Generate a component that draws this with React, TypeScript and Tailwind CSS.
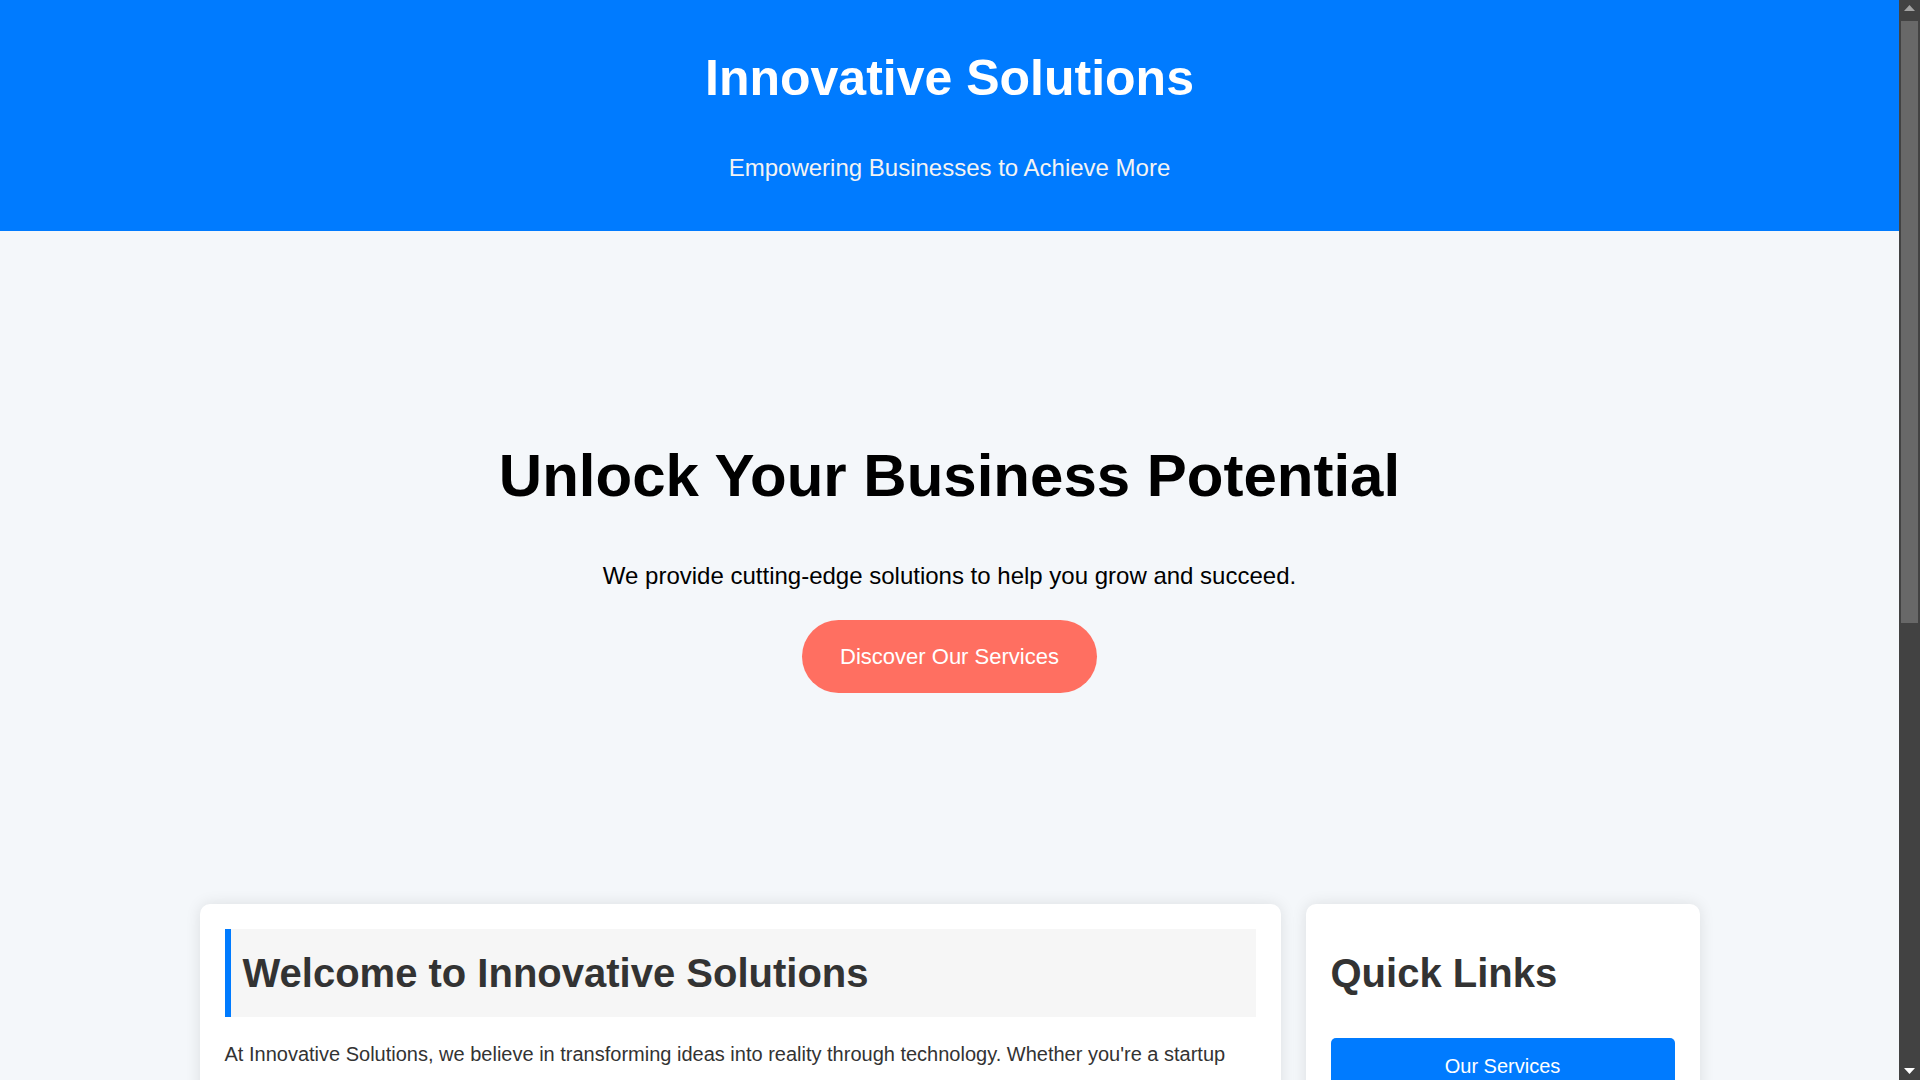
import React from "react";

function FakeScrollbar() {
  return (
    <div className="sticky top-0 flex h-[1080px] w-[21px] shrink-0 flex-col items-center bg-[#424242]">
      <svg width="11" height="6" viewBox="0 0 11 6" className="mt-[5px]">
        <polygon points="5.5,0 11,6 0,6" fill="#a3a3a3" />
      </svg>
      <div className="mt-[10px] h-[602px] w-[17px] bg-[#686868]" />
      <div className="flex-1" />
      <svg width="11" height="6" viewBox="0 0 11 6" className="mb-[6px]">
        <polygon points="0,0 11,0 5.5,6" fill="#ffffff" />
      </svg>
    </div>
  );
}

export default function App() {
  const links = ["Our Services", "About Us", "Our Portfolio", "Contact Us"];
  return (
    <div className="flex items-start bg-[#f4f7fa] font-['Liberation_Sans',Arial,sans-serif]">
      <div className="min-w-0 flex-1">
        <header className="bg-[#007bff] pt-[49px] pb-[49px] text-center">
          <h1 className="text-[50px] leading-[58px] font-bold text-white">Innovative Solutions</h1>
          <p className="mt-[47px] text-[24px] leading-[28px] text-[#f3f3f3]">Empowering Businesses to Achieve More</p>
        </header>

        <section className="flex flex-col items-center pt-[210px] pb-[211px] text-center">
          <h2 className="text-[60px] leading-[69px] font-bold text-black">Unlock Your Business Potential</h2>
          <p className="mt-[52px] text-[24px] leading-[28px] text-black">
            We provide cutting-edge solutions to help you grow and succeed.
          </p>
          <button className="mt-[30px] rounded-full bg-[#ff6f61] px-[38px] py-[24px] text-[22px] leading-[25px] text-white">
            Discover Our Services
          </button>
        </section>

        <main className="mx-auto grid w-[1500px] grid-cols-[1fr_394px] items-start gap-[25px]">
          <div className="rounded-[10px] bg-white p-[25px] text-[#333] shadow-[0_0_15px_rgba(0,0,0,0.1)]">
            <h2 className="border-l-[6px] border-[#007bff] bg-[#f6f6f6] pl-[12px] pt-[20px] pb-[20px] text-[40px] leading-[48px] font-bold">
              Welcome to Innovative Solutions
            </h2>
            <p className="mt-[19px] text-[20px] leading-[36px]">
              At Innovative Solutions, we believe in transforming ideas into reality through technology. Whether you're a startup
              looking to scale or an established enterprise seeking new opportunities, our team of experts is dedicated to
              delivering tailored solutions that drive growth, efficiency, and lasting success.
            </p>
            <h2 className="mt-[30px] border-l-[6px] border-[#007bff] bg-[#f6f6f6] pl-[12px] pt-[20px] pb-[20px] text-[40px] leading-[48px] font-bold">
              Why Choose Us?
            </h2>
            <ul className="mt-[20px] list-disc pl-[40px] text-[20px] leading-[36px]">
              <li>Experienced professionals with deep industry knowledge</li>
              <li>Customized strategies built around your goals</li>
              <li>Reliable support and transparent communication</li>
              <li>Proven track record of successful projects</li>
            </ul>
            <h2 className="mt-[30px] border-l-[6px] border-[#007bff] bg-[#f6f6f6] pl-[12px] pt-[20px] pb-[20px] text-[40px] leading-[48px] font-bold">
              Our Approach
            </h2>
            <p className="mt-[20px] text-[20px] leading-[36px]">
              We start by understanding your business, your challenges and your ambitions. From there, we design, build and
              refine solutions that fit seamlessly into your operations, so you can focus on what matters most.
            </p>
          </div>

          <aside className="rounded-[10px] bg-white p-[25px] text-[#333] shadow-[0_0_15px_rgba(0,0,0,0.1)]">
            <h2 className="pt-[20px] pb-[20px] text-[40px] leading-[48px] font-bold">Quick Links</h2>
            <div className="mt-[21px] flex flex-col gap-[10px]">
              {links.map((l) => (
                <a
                  key={l}
                  href="#"
                  className="block rounded-[5px] bg-[#007bff] pt-[16px] pb-[16px] text-center text-[20px] leading-[25px] text-white"
                >
                  {l}
                </a>
              ))}
            </div>
          </aside>
        </main>

        <footer className="mt-[50px] bg-[#333] py-[20px] text-center text-[16px] leading-[20px] text-white">
          © 2024 Innovative Solutions. All rights reserved.
        </footer>
      </div>
      <FakeScrollbar />
    </div>
  );
}
